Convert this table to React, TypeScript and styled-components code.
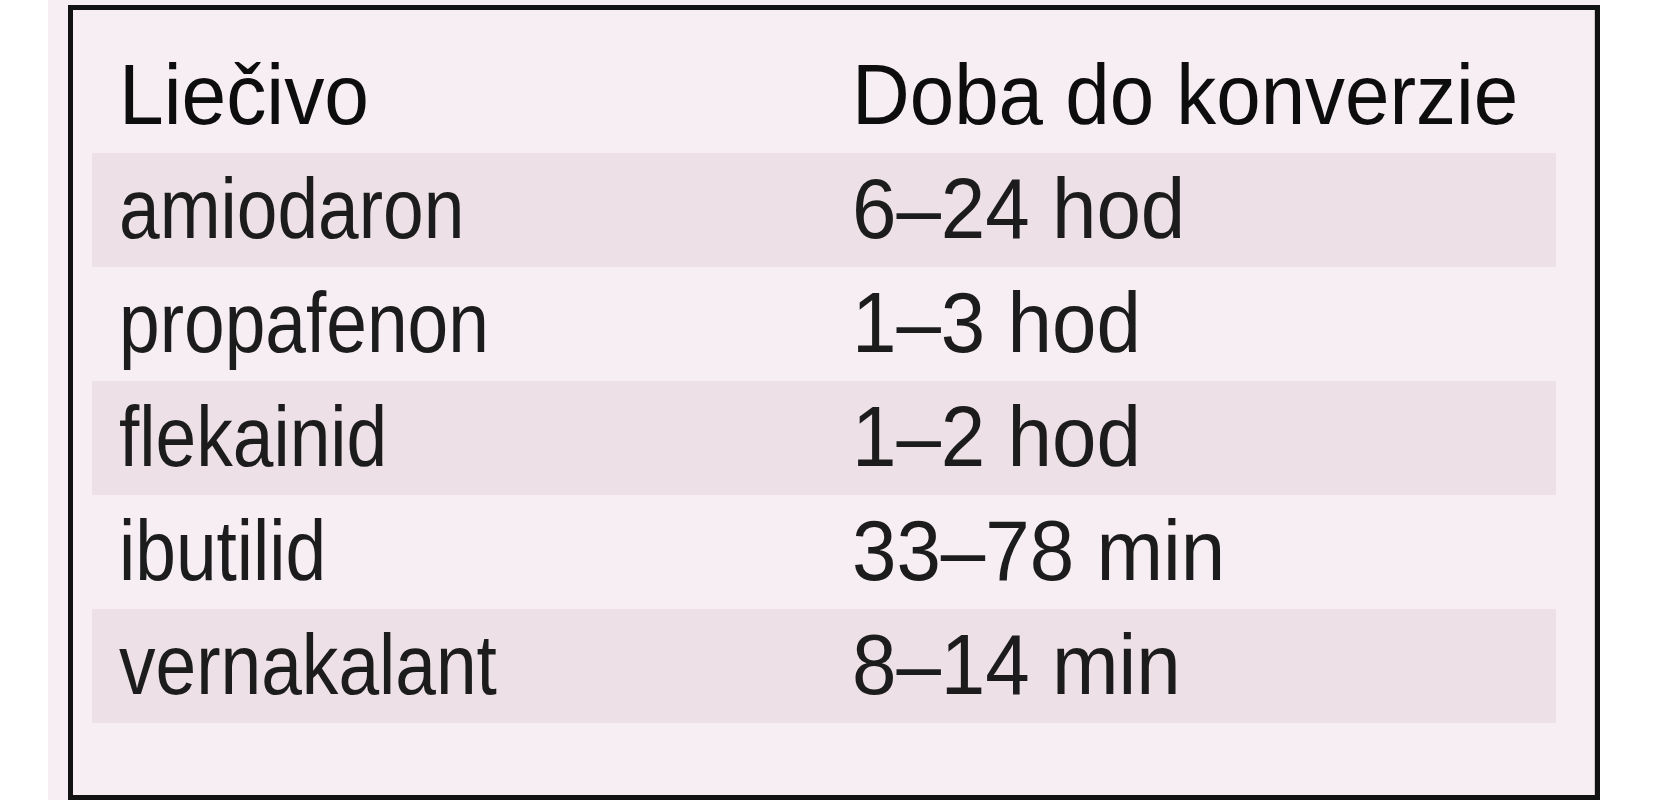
import React from "react";
import styled, { createGlobalStyle } from "styled-components";

const GlobalStyle = createGlobalStyle`
  html, body {
    margin: 0;
    padding: 0;
    background: #ffffff;
    height: 800px;
    overflow: hidden;
  }
`;

const Page = styled.div`
  width: 1552px;
  height: 800px;
  margin-left: 48px;
  padding: 5px 0 0 20px;
  box-sizing: border-box;
  background: #f7eef3;
`;

const Box = styled.div`
  height: 795px;
  box-sizing: border-box;
  border: 5px solid #121212;
  box-shadow: inset -1px 0 0 #cfc8cc;
  padding: 29px 39px 0 19px;
`;

const Table = styled.table`
  width: 1464px;
  table-layout: fixed;
  border-collapse: collapse;
  font-family: "Liberation Sans", Arial, Helvetica, sans-serif;
  font-size: 85px;
`;

const Row = styled.tr<{ $striped?: boolean }>`
  height: 114px;
  background: ${(p) => (p.$striped ? "#ede0e6" : "transparent")};
`;

const Cell = styled.td<{ $head?: boolean }>`
  box-sizing: border-box;
  padding: 0 0 3px 27px;
  line-height: 111px;
  vertical-align: top;
  white-space: nowrap;
  text-align: left;
  font-weight: normal;
  color: ${(p) => (p.$head ? "#0d0d0d" : "#1c1c1c")};

  &:first-child {
    width: 733px;
  }
`;

/* the source face is narrower than Arial, so squeeze each label a little */
const Label = styled.span<{ $squeeze: number }>`
  display: inline-block;
  transform: scaleX(${(p) => p.$squeeze});
  transform-origin: left center;
`;

interface Drug {
  name: string;
  time: string;
}

const drugs: Drug[] = [
  { name: "amiodaron", time: "6–24 hod" },
  { name: "propafenon", time: "1–3 hod" },
  { name: "flekainid", time: "1–2 hod" },
  { name: "ibutilid", time: "33–78 min" },
  { name: "vernakalant", time: "8–14 min" },
];

export default function App() {
  return (
    <>
      <GlobalStyle />
      <Page>
        <Box>
          <Table>
            <thead>
              <Row>
                <Cell as="th" $head>
                  <Label $squeeze={0.945}>Liečivo</Label>
                </Cell>
                <Cell as="th" $head>
                  <Label $squeeze={0.94}>Doba do konverzie</Label>
                </Cell>
              </Row>
            </thead>
            <tbody>
              {drugs.map((d, i) => (
                <Row key={d.name} $striped={i % 2 === 0}>
                  <Cell>
                    <Label $squeeze={0.86}>{d.name}</Label>
                  </Cell>
                  <Cell>
                    <Label $squeeze={0.94}>{d.time}</Label>
                  </Cell>
                </Row>
              ))}
            </tbody>
          </Table>
        </Box>
      </Page>
    </>
  );
}
